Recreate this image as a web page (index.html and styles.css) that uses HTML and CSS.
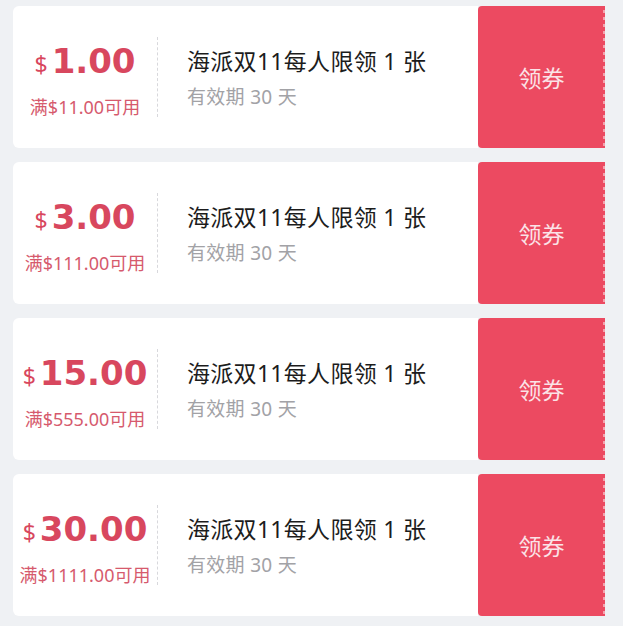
FILE: index.html
```html
<!DOCTYPE html>
<html lang="zh-CN">
<head>
    <meta charset="UTF-8">
    <meta name="viewport" content="width=device-width, initial-scale=1.0">
    <title>优惠券</title>
    <link rel="stylesheet" href="styles.css">
</head>
<body>

    <div class="coupon-list">
        <div class="coupon">
            <div class="coupon-body">
                <div class="price">
                    <div class="amount"><span class="currency">$</span>1.00</div>
                    <div class="limit">满$11.00可用</div>
                </div>
                <div class="info">
                    <div class="title">海派双11每人限领 1 张</div>
                    <div class="valid">有效期 30 天</div>
                </div>
            </div>
            <div class="coupon-btn">领券</div>
        </div>

        <div class="coupon">
            <div class="coupon-body">
                <div class="price">
                    <div class="amount"><span class="currency">$</span>3.00</div>
                    <div class="limit">满$111.00可用</div>
                </div>
                <div class="info">
                    <div class="title">海派双11每人限领 1 张</div>
                    <div class="valid">有效期 30 天</div>
                </div>
            </div>
            <div class="coupon-btn">领券</div>
        </div>

        <div class="coupon">
            <div class="coupon-body">
                <div class="price">
                    <div class="amount"><span class="currency">$</span>15.00</div>
                    <div class="limit">满$555.00可用</div>
                </div>
                <div class="info">
                    <div class="title">海派双11每人限领 1 张</div>
                    <div class="valid">有效期 30 天</div>
                </div>
            </div>
            <div class="coupon-btn">领券</div>
        </div>

        <div class="coupon">
            <div class="coupon-body">
                <div class="price">
                    <div class="amount"><span class="currency">$</span>30.00</div>
                    <div class="limit">满$1111.00可用</div>
                </div>
                <div class="info">
                    <div class="title">海派双11每人限领 1 张</div>
                    <div class="valid">有效期 30 天</div>
                </div>
            </div>
            <div class="coupon-btn">领券</div>
        </div>
    </div>

</body>
</html>
```

FILE: styles.css
```css
body {
    margin: 0;
    background: #eff1f4;
    font-family: "Noto Sans", "Noto Sans CJK SC", sans-serif;
}
.coupon-list { padding: 6px 18px 0 13px; display: flex; flex-direction: column; gap: 14px; }
.coupon { display: flex; height: 142px; }
.coupon-body {
    flex: 1; display: flex; align-items: center;
    background: #fff; border-radius: 6px 0 0 6px;
}
.price {
    box-sizing: border-box;
    width: 145px; height: 80px; padding-top: 7px;
    display: flex; flex-direction: column; align-items: center;
    border-right: 1px dashed #d8d8dc;
    color: #d8475e;
}
.amount {
    font-family: "DejaVu Sans", "Noto Sans CJK SC", sans-serif;
    font-size: 34px; font-weight: 700; line-height: 34px;
    white-space: nowrap;
}
.currency {
    font-family: "Noto Sans", sans-serif;
    font-size: 23px; font-weight: 400; margin-right: 4px;
}
.limit { font-size: 18px; line-height: 24px; color: #d65a6d; margin-top: 14px; white-space: nowrap; }
.info { padding-left: 29px; }
.title { font-size: 23px; line-height: 30px; color: #1c1c1c; letter-spacing: 0.3px; }
.valid { font-size: 19px; line-height: 24px; color: #a2a2a6; margin-top: 9px; letter-spacing: 0.3px; }
.coupon-btn {
    position: relative;
    width: 127px;
    display: flex; align-items: center; justify-content: center;
    background: #ec4a61; color: #fbe3e7;
    font-size: 23px; border-radius: 4px 0 0 4px;
}
.coupon-btn::after {
    content: ""; position: absolute; top: 0; bottom: 0; right: 0; width: 2px;
    background: repeating-linear-gradient(#ec4a61 0 4px, #f4a3ae 4px 7px);
}
```
